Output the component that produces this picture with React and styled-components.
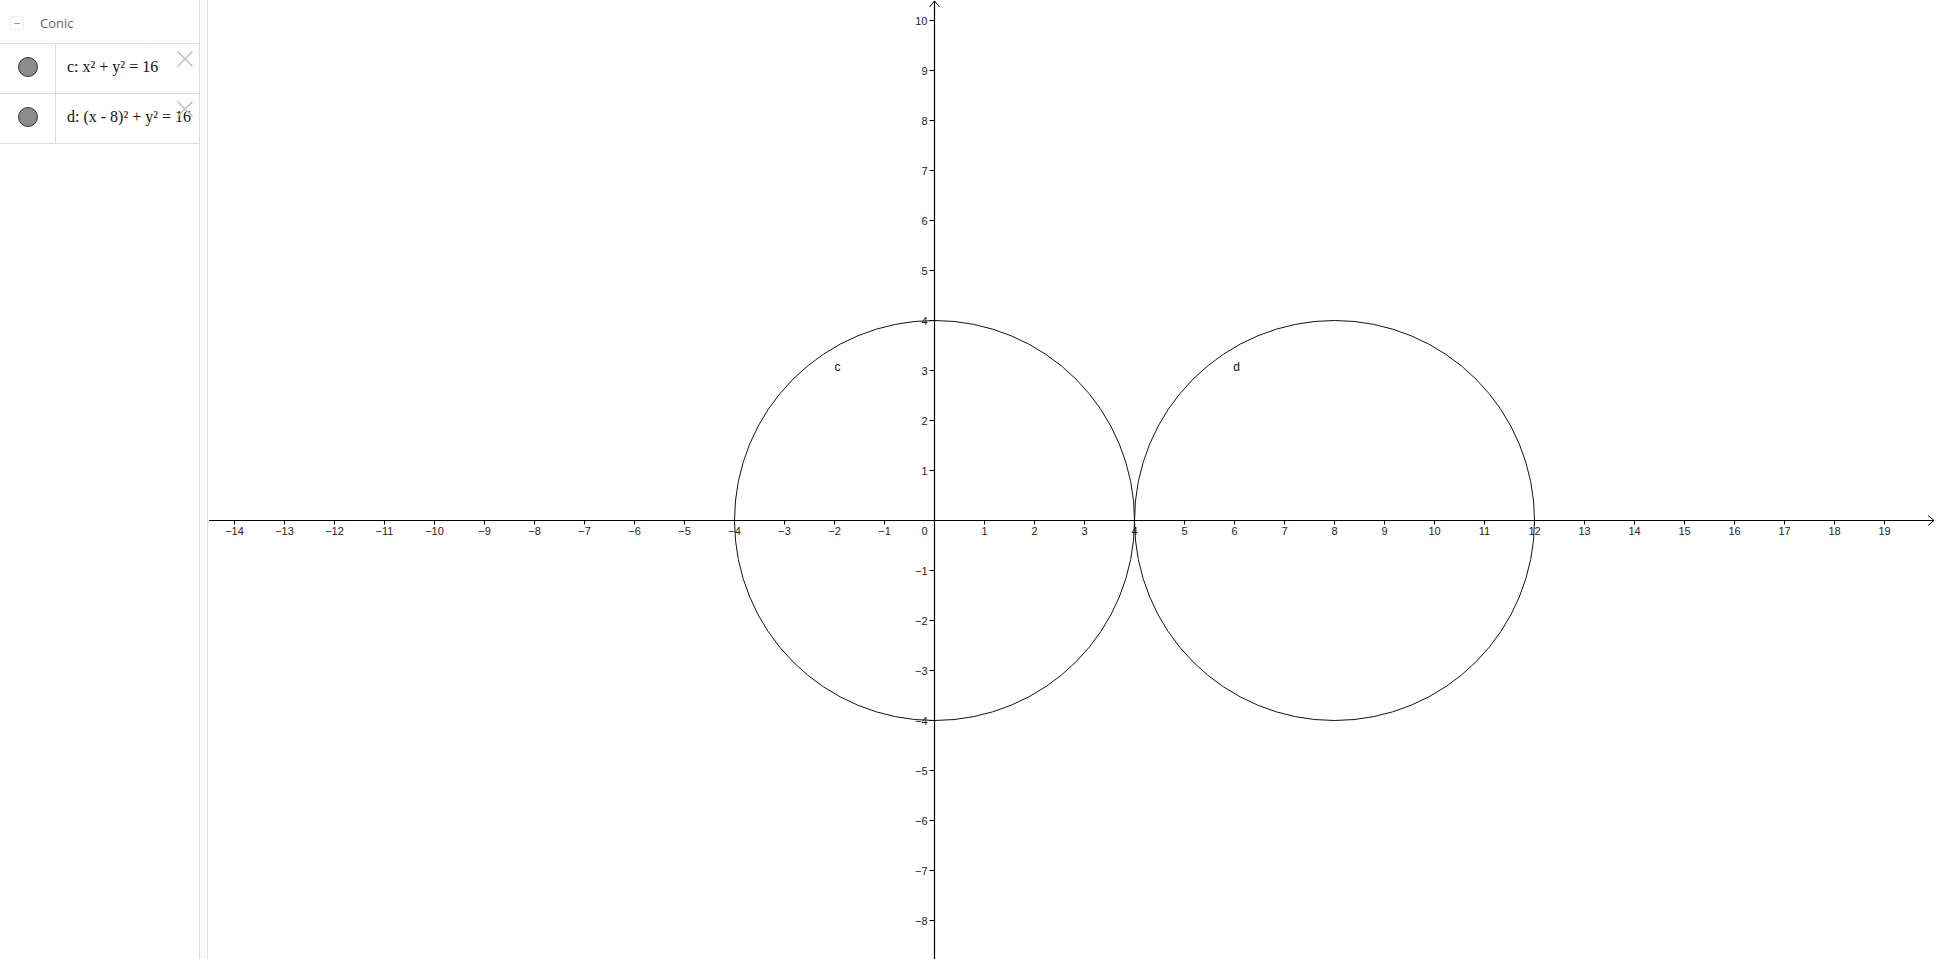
import React from 'react';
import styled, { createGlobalStyle } from 'styled-components';

const GlobalStyle = createGlobalStyle`
  html, body {
    margin: 0;
    padding: 0;
    background: #fff;
    overflow: hidden;
  }
  body {
    font-family: "Open Sans", "Liberation Sans", sans-serif;
  }
`;

const Page = styled.div`
  display: flex;
  width: 1936px;
  height: 959px;
  background: #fff;
`;

const AlgebraPanel = styled.aside`
  width: 200px;
  flex-shrink: 0;
  border-right: 1px solid #dcdcdc;
  box-sizing: border-box;
  display: flex;
  flex-direction: column;
`;

const Header = styled.div`
  height: 44px;
  box-sizing: border-box;
  display: flex;
  align-items: center;
  gap: 16px;
  padding: 3px 0 0 10px;
  border-bottom: 1px dotted #c8c8c8;
`;

const CollapseIcon = styled.span`
  width: 14px;
  height: 14px;
  box-sizing: border-box;
  border: 1px dotted #dedede;
  border-radius: 3px;
  display: flex;
  align-items: center;
  justify-content: center;

  &::after {
    content: '';
    width: 6px;
    height: 1px;
    background: #9a9a9a;
  }
`;

const HeaderTitle = styled.span`
  font-size: 13px;
  color: #666;
`;

const Row = styled.div`
  position: relative;
  height: 49px;
  display: flex;
  border-bottom: 1px solid #dcdcdc;
  overflow: hidden;
`;

const MarbleCell = styled.div`
  width: 56px;
  flex-shrink: 0;
  border-right: 1px solid #dcdcdc;
  display: flex;
  align-items: center;
  justify-content: center;
  box-sizing: border-box;
`;

const Marble = styled.span`
  width: 20px;
  height: 20px;
  margin-top: -3px;
  border-radius: 50%;
  box-sizing: border-box;
  background: radial-gradient(circle, #8d8d8d 0 60%, #828282 100%);
  border: 1px solid #333;
`;

const Formula = styled.div`
  padding: 0 0 3px 11px;
  display: flex;
  align-items: center;
  white-space: pre;
  font-family: "Liberation Serif", "DejaVu Serif", serif;
  font-size: 16px;
  color: #111;
`;

const DeleteButton = styled.svg`
  position: absolute;
  top: 6px;
  right: 5px;
  width: 18px;
  height: 18px;
`;

const Splitter = styled.div`
  width: 7px;
  flex-shrink: 0;
  background: #fafafa;
  border-right: 1px solid #e2e2e2;
`;

const Graphics = styled.main`
  flex: 1;
  height: 959px;
  overflow: hidden;
`;

const Canvas = styled.svg`
  display: block;
  width: 100%;
  height: 100%;
  font-family: "Liberation Sans", Arial, sans-serif;
`;

const CrossIcon = () => (
  <DeleteButton viewBox="0 0 18 18">
    <path d="M1.5 1.5 L16.5 16.5 M16.5 1.5 L1.5 16.5" stroke="#c2c2c2" strokeWidth="1.7" fill="none" />
  </DeleteButton>
);

// graph geometry (svg coords; graphics panel starts at page x = 208)
const W = 1728;
const H = 959;
const OX = 726.5;
const OY = 520.5;
const U = 50;
const MINUS = '\u2212';

const fmt = (n) => (n < 0 ? MINUS + Math.abs(n) : String(n));

const GraphView = () => {
  const xs = [];
  for (let i = -14; i <= 19; i++) if (i !== 0) xs.push(i);
  const ys = [];
  for (let j = -8; j <= 10; j++) if (j !== 0) ys.push(j);

  return (
    <Canvas viewBox={`0 0 ${W} ${H}`}>
      {/* axes */}
      <line x1={1} y1={OY} x2={W - 2} y2={OY} stroke="#000" strokeWidth="1.2" />
      <polyline points={`${W - 8},${OY - 5} ${W - 2},${OY} ${W - 8},${OY + 5}`} fill="none" stroke="#000" strokeWidth="1" />
      <line x1={OX} y1={1} x2={OX} y2={H} stroke="#000" strokeWidth="1.2" />
      <polyline points={`${OX - 5},${7} ${OX},${1} ${OX + 5},${7}`} fill="none" stroke="#000" strokeWidth="1" />

      {xs.map((i) => {
        const x = OX + i * U;
        return (
          <g key={`x${i}`}>
            <line x1={x} y1={OY} x2={x} y2={OY + 4} stroke="#000" strokeWidth="1" />
            <text x={x} y={OY + 14.5} fontSize="11" textAnchor="middle" fill="#222">
              {fmt(i)}
            </text>
          </g>
        );
      })}
      <text x={OX - 7} y={OY + 14.5} fontSize="11" textAnchor="end" fill="#222">0</text>

      {ys.map((j) => {
        const y = OY - j * U;
        return (
          <g key={`y${j}`}>
            <line x1={OX - 5} y1={y} x2={OX} y2={y} stroke="#000" strokeWidth="1" />
            <text x={OX - 7} y={y + 4} fontSize="11" textAnchor="end" fill="#222">
              {fmt(j)}
            </text>
          </g>
        );
      })}

      {/* conics */}
      <circle cx={OX} cy={OY} r={4 * U} fill="none" stroke="#111" strokeWidth="1" />
      <circle cx={OX + 8 * U} cy={OY} r={4 * U} fill="none" stroke="#111" strokeWidth="1" />

      <text x={OX - 97} y={OY - 150} fontSize="12" textAnchor="middle" fill="#111">c</text>
      <text x={OX + 302} y={OY - 150} fontSize="12" textAnchor="middle" fill="#111">d</text>
    </Canvas>
  );
};

const conics = [
  { name: 'c', formula: 'c: x² + y² = 16' },
  { name: 'd', formula: 'd: (x - 8)² + y² = 16' },
];

export default function App() {
  return (
    <>
      <GlobalStyle />
      <Page>
        <AlgebraPanel>
          <Header>
            <CollapseIcon />
            <HeaderTitle>Conic</HeaderTitle>
          </Header>
          {conics.map((c) => (
            <Row key={c.name}>
              <MarbleCell>
                <Marble />
              </MarbleCell>
              <Formula>{c.formula}</Formula>
              <CrossIcon />
            </Row>
          ))}
        </AlgebraPanel>
        <Splitter />
        <Graphics>
          <GraphView />
        </Graphics>
      </Page>
    </>
  );
}
